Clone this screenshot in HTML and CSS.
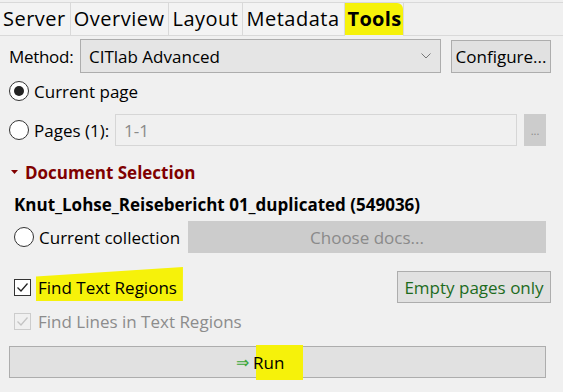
FILE: index.html
```html
<!DOCTYPE html>
<html>
<head>
<meta charset="utf-8">
<link rel="stylesheet" href="styles.css">
</head>
<body>
<div class="tabs">
  <div class="tab">Server</div>
  <div class="tab">Overview</div>
  <div class="tab">Layout</div>
  <div class="tab">Metadata</div>
  <div class="tab active"><span class="hl">Tools</span></div>
  <div class="tab-fill"></div>
</div>
<div class="panel">
  <div class="row method-row">
    <span class="label">Method:</span>
    <div class="combo">
      <span>CITlab Advanced</span>
      <svg class="chev" width="10" height="6" viewBox="0 0 10 6"><path d="M0.5 0.5 L5 5 L9.5 0.5" fill="none" stroke="#777" stroke-width="1"/></svg>
    </div>
    <div class="btn configure">Configure...</div>
  </div>
  <div class="row radio-row">
    <span class="radio checked"></span><span class="label">Current page</span>
  </div>
  <div class="row pages-row">
    <span class="radio"></span><span class="label">Pages (1):</span>
    <div class="field">1-1</div>
    <div class="btn dots">...</div>
  </div>
  <div class="row section">
    <svg class="tri" width="7" height="4" viewBox="0 0 7 4"><path d="M0 0 H7 L3.5 4 Z" fill="#800000"/></svg>
    <span>Document Selection</span>
  </div>
  <div class="row docname">Knut_Lohse_Reisebericht 01_duplicated (549036)</div>
  <div class="row coll-row">
    <span class="radio"></span><span class="label">Current collection</span>
    <div class="btn choose">Choose docs...</div>
  </div>
  <div class="row find-row">
    <span class="check"><svg width="15" height="15" viewBox="0 0 15 15"><path d="M2.5 7.5 L6 11 L12.5 3.5" fill="none" stroke="#222" stroke-width="1.3"/></svg></span>
    <span class="label hl2">Find Text Regions</span>
    <div class="btn empty">Empty pages only</div>
  </div>
  <div class="row lines-row">
    <span class="check disabled"><svg width="15" height="15" viewBox="0 0 15 15"><path d="M2.5 7.5 L6 11 L12.5 3.5" fill="none" stroke="#c4c4c4" stroke-width="1.3"/></svg></span>
    <span class="label dis">Find Lines in Text Regions</span>
  </div>
  <div class="btn run"><span class="arrow">&rArr;</span><span class="hl3">Run</span></div>
</div>
</body>
</html>
```
FILE: styles.css
```css
* { box-sizing: border-box; }
html, body {
  margin: 0;
  padding: 0;
  background: #f0f0f0;
  font-family: "Open Sans", "Noto Sans", sans-serif;
  color: #000;
  width: 563px;
  height: 392px;
  overflow: hidden;
}
.tabs {
  display: flex;
  margin-top: 2px;
  height: 34px;
  border-top: 1px solid #d9d9d9;
}
.tab {
  font-size: 20px;
  line-height: 32px;
  padding: 0 4px 0 3px;
  border-right: 1px solid #d9d9d9;
  border-bottom: 1px solid #d9d9d9;
  background: #f3f3f3;
  white-space: nowrap;
  letter-spacing: 0.5px;
}
.tab.active {
  background: #f0f0f0;
  border-bottom: none;
  font-weight: bold;
  padding: 0;
  letter-spacing: 0.3px;
  font-size: 20px;
}
.tab.active .hl {
  display: block;
  background: #f6f20a;
  padding: 0 2px 0 3px;
  height: 32px;
  border-radius: 0 6px 0 0;
}
.tab-fill {
  flex: 1;
  border-bottom: 1px solid #d9d9d9;
}
.panel {
  padding: 3px 12px 0 9px;
  display: flex;
  flex-direction: column;
  font-size: 17px;
}
.row {
  display: flex;
  align-items: center;
}
.label { white-space: nowrap; }
.method-row { height: 34px; }
.method-row .label { width: 71px; letter-spacing: -0.3px; }
.combo {
  flex: 1;
  height: 34px;
  background: #e5e5e5;
  border: 1px solid #adadad;
  display: flex;
  align-items: center;
  justify-content: space-between;
  padding: 0 9px 0 8px;
}
.btn {
  background: #e1e1e1;
  border: 1px solid #adadad;
  display: flex;
  align-items: center;
  justify-content: center;
  white-space: nowrap;
}
.configure {
  margin-left: 10px;
  width: 100px;
  height: 33px;
}
.radio {
  width: 20px;
  height: 20px;
  border: 1px solid #333;
  border-radius: 50%;
  background: #fff;
  margin-right: 5px;
  flex: none;
  position: relative;
}
.radio.checked::after {
  content: "";
  position: absolute;
  left: 4px; top: 4px;
  width: 10px; height: 10px;
  border-radius: 50%;
  background: #222;
}
.radio-row { height: 20px; margin-top: 8px; }
.pages-row { height: 32px; margin-top: 13px; }
.pages-row .label { width: 81px; }
.field {
  width: 402px;
  height: 32px;
  background: #f0f0f0;
  border: 1px solid #d6d6d6;
  color: #8a8a8a;
  padding-left: 8px;
  display: flex;
  align-items: center;
}
.dots {
  margin-left: 7px;
  width: 22px;
  height: 32px;
  background: #cccccc;
  border-color: #cccccc;
  color: #8a8a8a;
  font-size: 11px;
}
.section {
  height: 22px;
  margin-top: 15px;
  color: #800000;
  font-weight: bold;
  padding-left: 2px;
}
.section .tri { margin-right: 7px; }
.docname {
  height: 22px;
  margin-top: 10px;
  font-weight: bold;
  padding-left: 5px;
}
.coll-row { height: 32px; margin-top: 6px; }
.coll-row .radio { margin-left: 5px; }
.coll-row .label { width: 149px; }
.choose {
  width: 358px;
  height: 32px;
  background: #cccccc;
  border-color: #cccccc;
  color: #8a8a8a;
}
.find-row { height: 32px; margin-top: 18px; }
.check {
  width: 17px;
  height: 17px;
  border: 1px solid #333;
  background: #fff;
  margin-left: 5px;
  margin-right: 7px;
  display: flex;
  align-items: center;
  justify-content: center;
  flex: none;
}
.check.disabled { border-color: #cccccc; background: #f0f0f0; }
.hl2 {
  background: #f6f20a;
  height: 34px;
  display: flex;
  align-items: center;
  padding: 6px 6px 0 2px;
  margin-left: -2px;
  margin-top: -6px;
  clip-path: polygon(0 28%, 100% 0, 100% 100%, 0 100%);
}
.empty {
  margin-left: auto;
  width: 154px;
  height: 32px;
  color: #1d6b1d;
}
.lines-row { height: 20px; margin-top: 8px; }
.dis { color: #8c8c8c; }
.run {
  margin-top: 15px;
  width: 537px;
  height: 32px;
  background: #e1e1e1;
  justify-content: flex-start;
  padding-left: 226px;
}
.arrow { color: #3aa63a; font-size: 16px; margin-right: 4px; }
.hl3 {
  background: linear-gradient(to right, transparent 3px, #f6f20a 3px);
  height: 35px;
  display: flex;
  align-items: center;
  padding: 0 19px 0 0;
}
```
